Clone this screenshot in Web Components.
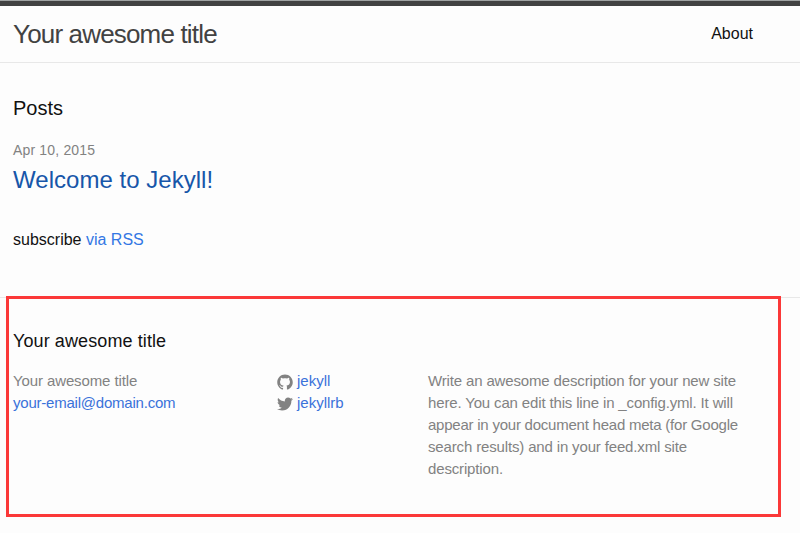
<!DOCTYPE html>
<html lang="en"><head><meta charset="utf-8"><title>Your awesome title</title>
<style>
body{margin:0;background:#fdfdfd;color:#111;font:16px/24px "Liberation Sans",Arial,sans-serif;height:533px;overflow:hidden}
</style></head><body>
<site-header><span slot="title">Your awesome title</span><span slot="nav">About</span></site-header>
<post-list></post-list>
<site-footer></site-footer>
<script>
const define=(name,html)=>customElements.define(name,class extends HTMLElement{
  constructor(){super();this.attachShadow({mode:'open'}).innerHTML=html;}
});
define('site-header',`<style>
:host{display:flex;box-sizing:border-box;height:63px;border-top:1px solid #a0a3a3;border-bottom:1px solid #e8e8e8;box-shadow:inset 0 5px #424242;padding:5px 47px 0 13px;justify-content:space-between;align-items:center}
.t{font-size:26px;letter-spacing:-.83px;color:#424242}
.n{font-size:16px}
</style><div class="t"><slot name="title"></slot></div><div class="n"><slot name="nav"></slot></div>`);
define('post-list',`<style>
:host{display:block;box-sizing:border-box;height:234px;padding:30px 13px 0}
h1{font-size:20px;font-weight:400;line-height:30px;margin:0 0 15px}
.d{font-size:14px;line-height:24px;letter-spacing:.17px;color:#828282}
h2{font-size:24px;font-weight:400;line-height:36px;letter-spacing:.03px;margin:0 0 30px;color:#1756a9}
p{margin:0}a{color:#3377e4}
</style><h1>Posts</h1><div class="d">Apr 10, 2015</div><h2>Welcome to Jekyll!</h2><p>subscribe <a>via RSS</a></p>`);
define('icon-link',`<style>
:host{display:flex;align-items:center;gap:4px;color:#3a72da;height:22px}
</style><slot name="icon"></slot><slot></slot>`);
define('site-footer',`<style>
:host{display:block;box-sizing:border-box;height:236px;border-top:1px solid #e8e8e8;padding:30px 13px 0;position:relative;font-size:15px;line-height:22px;color:#828282}
h2{font-size:18px;font-weight:400;line-height:27px;letter-spacing:.1px;margin:0 0 15px;color:#111}
.g{display:grid;grid-template-columns:264px 151px 330px}
.n{letter-spacing:-.11px}
.d{letter-spacing:-.15px;white-space:nowrap}
.tight{letter-spacing:-.23px}
a{color:#3a72da;letter-spacing:-.22px}
svg{width:16px;height:16px;fill:#828282;margin-top:2px}
.m{position:absolute;left:6px;top:-2px;width:775px;height:221px;box-sizing:border-box;border:3px solid #fb3838}
</style><h2>Your awesome title</h2><div class="g"><div class="n">Your awesome title<br><a>your-email@domain.com</a></div>
<div><icon-link><svg slot="icon" viewBox="0 0 16 16"><path d="M7.999,0.431c-4.285,0-7.76,3.474-7.76,7.761c0,3.428,2.223,6.337,5.307,7.363c0.388,0.071,0.53-0.168,0.53-0.374c0-0.184-0.007-0.672-0.01-1.32c-2.159,0.469-2.614-1.04-2.614-1.04c-0.353-0.896-0.862-1.135-0.862-1.135c-0.705-0.481,0.053-0.472,0.053-0.472c0.779,0.055,1.189,0.8,1.189,0.8c0.692,1.186,1.816,0.843,2.258,0.645c0.071-0.502,0.271-0.843,0.493-1.037C4.86,11.425,3.049,10.76,3.049,7.786c0-0.847,0.302-1.54,0.799-2.082C3.768,5.507,3.501,4.718,3.924,3.65c0,0,0.652-0.209,2.134,0.796C6.677,4.273,7.34,4.187,8,4.184c0.659,0.003,1.323,0.089,1.943,0.261c1.482-1.004,2.132-0.796,2.132-0.796c0.423,1.068,0.157,1.857,0.077,2.054c0.497,0.542,0.798,1.235,0.798,2.082c0,2.981-1.814,3.637-3.543,3.829c0.279,0.24,0.527,0.713,0.527,1.437c0,1.037-0.01,1.874-0.01,2.129c0,0.208,0.14,0.449,0.534,0.373c3.081-1.028,5.302-3.935,5.302-7.362C15.76,3.906,12.285,0.431,7.999,0.431z"/></svg>jekyll</icon-link>
<icon-link><svg slot="icon" viewBox="0 0 16 16"><path d="M15.969,3.058c-0.586,0.26-1.217,0.436-1.878,0.515c0.675-0.405,1.194-1.045,1.438-1.809c-0.632,0.375-1.332,0.647-2.076,0.793c-0.596-0.636-1.446-1.033-2.387-1.033c-1.806,0-3.27,1.464-3.27,3.27c0,0.256,0.029,0.506,0.085,0.745C5.163,5.404,2.753,4.102,1.14,2.124C0.859,2.607,0.698,3.168,0.698,3.767c0,1.134,0.577,2.135,1.455,2.722C1.616,6.472,1.112,6.325,0.671,6.08c0,0.014,0,0.027,0,0.041c0,1.584,1.127,2.906,2.623,3.206C3.02,9.402,2.731,9.442,2.433,9.442c-0.211,0-0.416-0.021-0.615-0.059c0.416,1.299,1.624,2.245,3.055,2.271c-1.119,0.877-2.529,1.4-4.061,1.4c-0.264,0-0.524-0.015-0.78-0.046c1.447,0.928,3.166,1.469,5.013,1.469c6.015,0,9.304-4.983,9.304-9.304c0-0.142-0.003-0.283-0.009-0.423C14.976,4.29,15.531,3.714,15.969,3.058z"/></svg>jekyllrb</icon-link></div>
<div class="d">Write an awesome description for your new site<br>here. You can edit this line in _config.yml. It will<br><span class="tight">appear in your document head meta (for Google</span><br>search results) and in your feed.xml site<br>description.</div></div><div class="m"></div>`);
</script></body></html>
